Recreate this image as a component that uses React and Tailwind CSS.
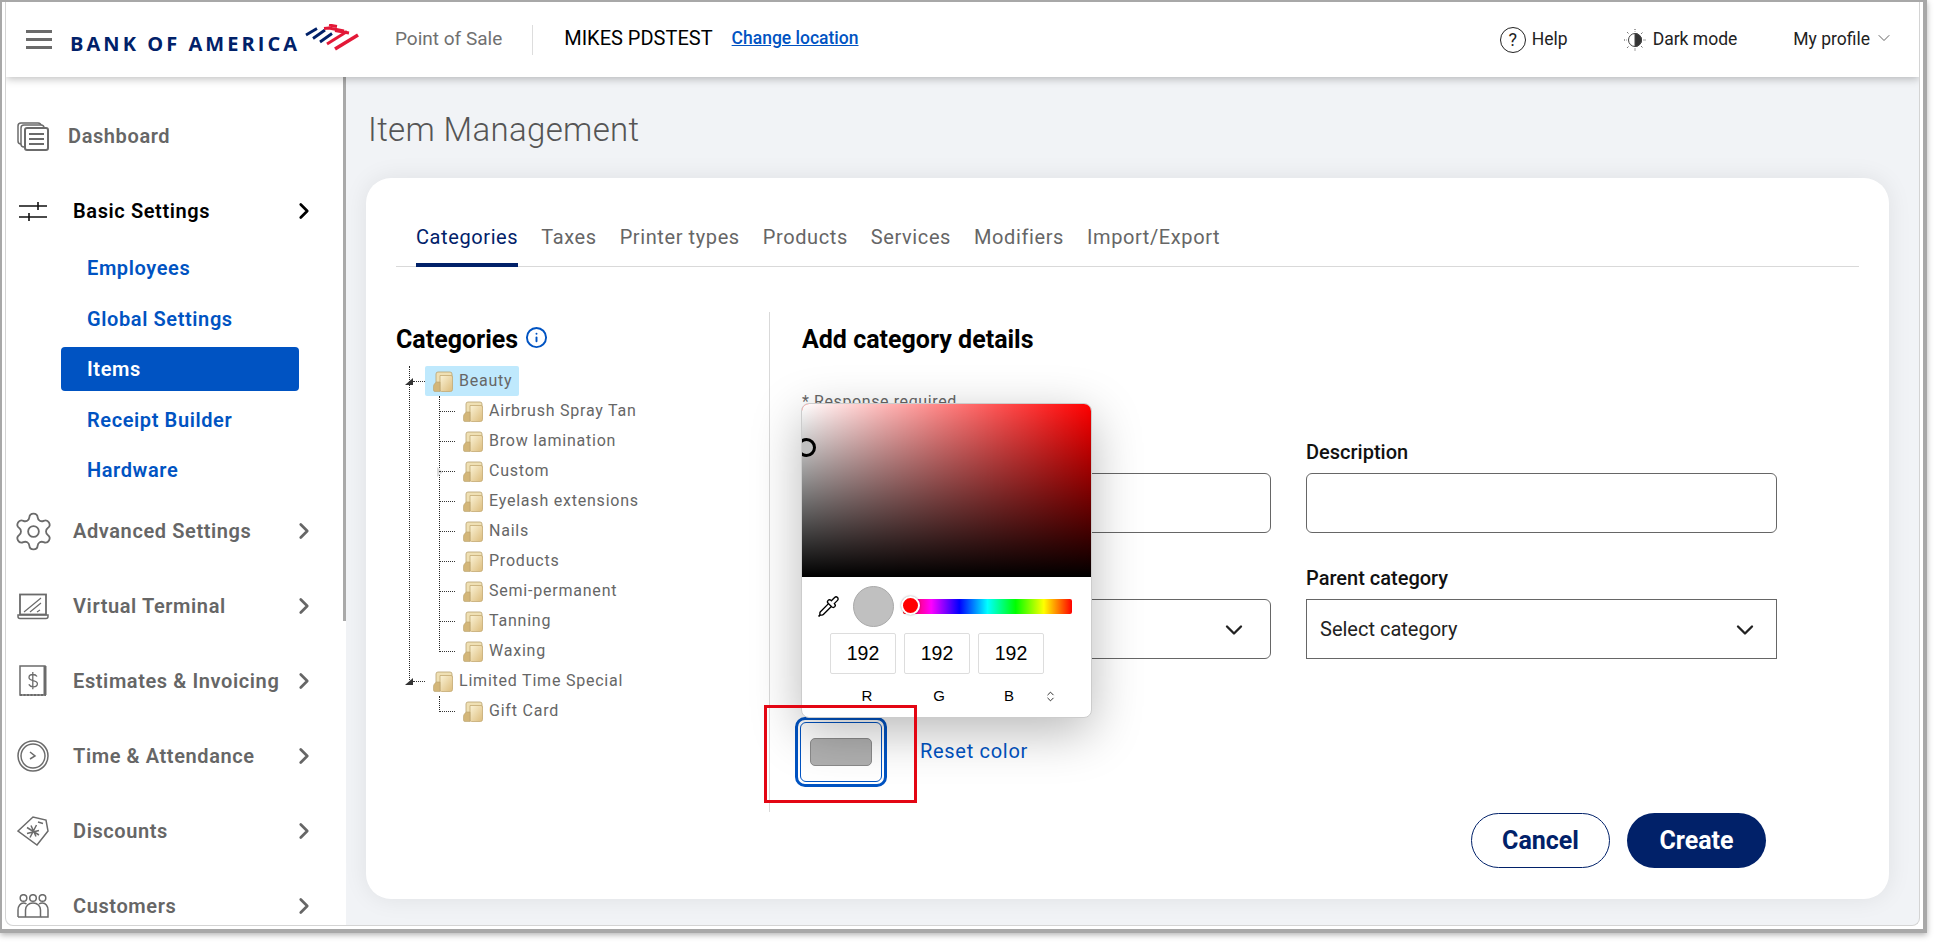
import React from "react";
import { ChevronRight, ChevronDown, ChevronsUpDown, Info, Pipette, Settings } from "lucide-react";

const Ic = { stroke: "#6b6b6b", fill: "none", strokeWidth: 1.5 };

function DashboardIcon() {
  return (
    <svg width="32" height="29" viewBox="0 0 32 29" {...Ic}>
      <rect x="1" y="1" width="23" height="21" rx="3" fill="#fff" />
      <rect x="4" y="3" width="23" height="22" rx="3" fill="#fff" />
      <rect x="8" y="6" width="23" height="22" rx="2" fill="#fff" strokeWidth="2" />
      <path d="M12 12h15M12 17h15M12 22h15" strokeWidth="2" />
    </svg>
  );
}
function SlidersIcon() {
  return (
    <svg width="30" height="21" viewBox="0 0 30 21" stroke="#111" strokeWidth="1.6" fill="none">
      <path d="M1 5h28M1 16h28M20 1v8M11 12v8" />
    </svg>
  );
}
function LaptopIcon() {
  return (
    <svg width="32" height="27" viewBox="0 0 32 27" {...Ic}>
      <rect x="3" y="1.5" width="26" height="20" strokeWidth="1.8" />
      <path d="M7 19 24 5M13 19l11-9M20 19l3-2" strokeWidth="1.2" />
      <path d="M1 22h30v1.5a2 2 0 0 1-2 2H3a2 2 0 0 1-2-2z" strokeWidth="1.5" />
    </svg>
  );
}
function ReceiptIcon() {
  return (
    <svg width="28" height="32" viewBox="0 0 28 32" {...Ic}>
      <path d="M1 1h25v29H1z" />
      <path d="M26 1v29" strokeWidth="3" />
      <path d="M1 30h26" strokeWidth="2" strokeDasharray="2 1.5" />
      <path d="M18 11.5c-1-1.6-2.6-2-4.2-2-2 0-3.8 1-3.8 3 0 4.2 8.4 2 8.4 6.3 0 2-1.9 3-4.1 3-2 0-3.6-.8-4.5-2.4M13.8 7v17.2" strokeWidth="1.3" />
    </svg>
  );
}
function ClockIcon() {
  return (
    <svg width="32" height="32" viewBox="0 0 32 32" {...Ic}>
      <circle cx="16" cy="16" r="15" />
      <circle cx="16" cy="16" r="12" />
      <path d="m13 12 5 4-5 3" />
    </svg>
  );
}
function TagIcon() {
  return (
    <svg width="32" height="30" viewBox="0 0 32 30" {...Ic}>
      <path d="M1 15 16 1l13 3 2 11-11 14z" />
      <path d="M21 6l5 1.5" />
      <path d="M10 11.5 22 19M19.5 9 13 21.5M10 17.5l12-3M14 9.5l5 11" strokeWidth="1.5" />
    </svg>
  );
}
function PeopleIcon() {
  return (
    <svg width="32" height="24" viewBox="0 0 32 24" {...Ic}>
      <circle cx="6.5" cy="4" r="3.3" />
      <circle cx="16" cy="4" r="3.3" />
      <circle cx="25.5" cy="4" r="3.3" />
      <path d="M1 23v-7c0-4 2.5-7 5.5-7 1 0 2 .3 3 1" />
      <path d="M22 10c1-.7 2.3-1 3.5-1 3 0 5.5 3 5.5 7v7H24" />
      <path d="M8.5 23v-7c0-4 3-7 7.500-7s7.500 3 7.500 7v7zM1 23h7" />
    </svg>
  );
}
function HalfSun() {
  return (
    <svg width="24" height="24" viewBox="0 0 24 24" fill="none" stroke="#444" strokeWidth="1">
      <circle cx="12" cy="12" r="6.5" />
      <path d="M12 5.5a6.5 6.5 0 0 1 0 13z" fill="#333" />
      <path d="M12 1v2.5M12 20.5V23M1 12h2.5M20.500 12H23M4.200 4.200 6 6M18 18l1.800 1.800M4.200 19.800 6 18M18 6l1.800-1.800" strokeDasharray="1 1" />
    </svg>
  );
}
function Flag() {
  return (
    <svg width="54" height="27" viewBox="0 0 54 27" fill="none" strokeLinecap="butt">
      <g stroke="#012169" strokeWidth="2.8">
        <path d="M1 11 12 4.5" />
        <path d="M8 14.5 20 6" />
        <path d="M15 18 27 9.500" />
      </g>
      <g stroke="#e31837" strokeWidth="3">
        <path d="M24 1 32 2.500" />
        <path d="M19 4.500 24 4 39 7" />
        <path d="M30 6.500 44 9" />
        <path d="M22 20 42 7.500" />
        <path d="M30 25 53 11" strokeWidth="3.500" />
      </g>
    </svg>
  );
}
function Folder() {
  return (
    <svg width="20" height="21" viewBox="0 0 20 21" className="shrink-0">
      <defs>
        <linearGradient id="fld" x1="0" y1="0" x2="1" y2="1">
          <stop offset="0" stopColor="#fbf3d6" />
          <stop offset="1" stopColor="#dcbc7c" />
        </linearGradient>
      </defs>
      <path d="M3 11V3a2 2 0 0 1 2-2h12a2 2 0 0 1 2 2v4H8v12H3z" fill="#efe0b4" stroke="#b9a26f" strokeWidth=".8" />
      <path d="M7 4.500h11a1.500 1.500 0 0 1 1.500 1.500v12.500a2 2 0 0 1-2 2H8.500A1.500 1.500 0 0 1 7 19z" fill="url(#fld)" stroke="#c4aa72" strokeWidth=".8" />
      <path d="M.5 15.500c0-2 1.500-3.500 3-4.500h3.500v9.500H2a1.500 1.500 0 0 1-1.500-1.500z" fill="#d3b679" stroke="#b9a26f" strokeWidth=".6" />
    </svg>
  );
}

function TreeRow({ label, sub, active }) {
  return (
    <div className={"h-[30px] flex items-center " + (sub ? "pl-[59px]" : "pl-[29px]")}>
      <div className={"flex items-center h-[30px] pl-[8px] pr-[7px] gap-[6px] rounded-[2px] " + (active ? "bg-[#bfe9fd]" : "")}>
        <Folder />
        <span className="text-[16px] tracking-[0.78px] text-[#666] whitespace-nowrap">{label}</span>
      </div>
    </div>
  );
}

const DOT_V = "absolute w-0 border-l border-dotted border-[#222]";
const DOT_H = "absolute h-0 border-t border-dotted border-[#333]";

function Tree() {
  const subs = ["Airbrush Spray Tan", "Brow lamination", "Custom", "Eyelash extensions", "Nails", "Products", "Semi-permanent", "Tanning", "Waxing"];
  return (
    <div className="relative mt-[12px]">
      <div className={DOT_V + " left-[13px] top-0 h-[314px]"} />
      <div className={DOT_V + " left-[43px] top-[30px] h-[256px]"} />
      <div className={DOT_V + " left-[43px] top-[330px] h-[16px]"} />
      <div className="absolute left-[9px] top-[12px] w-0 h-0 border-l-[8px] border-l-transparent border-b-[7px] border-b-[#333]" />
      <div className="absolute left-[9px] top-[312px] w-0 h-0 border-l-[8px] border-l-transparent border-b-[7px] border-b-[#333]" />
      <div className="absolute left-[41px] top-[101px] w-0 h-0 border-l-[6px] border-l-[#ddd] border-y-[5px] border-y-transparent" />
      <div className={DOT_H + " left-[17px] top-[15px] w-[12px]"} />
      <div className={DOT_H + " left-[17px] top-[315px] w-[12px]"} />
      {subs.map((s, i) => (
        <div key={s} className={DOT_H + " left-[43px] w-[16px]"} style={{ top: 45 + i * 30 }} />
      ))}
      <div className={DOT_H + " left-[43px] top-[345px] w-[16px]"} />
      <TreeRow label="Beauty" active />
      {subs.map((s) => (
        <TreeRow key={s} label={s} sub />
      ))}
      <TreeRow label="Limited Time Special" />
      <TreeRow label="Gift Card" sub />
    </div>
  );
}

function NavRow({ icon, label, dark, noChevron, h = "h-[75px]", gap = "ml-[24px]" }) {
  return (
    <div className={"flex items-center pl-[11px] shrink-0 " + h}>
      <div className="w-[32px] flex justify-center shrink-0">{icon}</div>
      <span className={gap + " text-[20px] tracking-[0.6px] font-semibold whitespace-nowrap " + (dark ? "text-black" : "text-[#666]")}>{label}</span>
      {!noChevron && (
        <ChevronRight size={26} strokeWidth={2.5} className={"ml-auto mr-[26px] shrink-0 " + (dark ? "text-black" : "text-[#666]")} />
      )}
    </div>
  );
}

function Sidebar() {
  const subs = ["Employees", "Global Settings", "Items", "Receipt Builder", "Hardware"];
  return (
    <aside className="w-[340px] shrink-0 flex bg-white overflow-hidden rounded-bl-[8px]">
      <nav className="w-[337px] shrink-0 pt-[24px] flex flex-col">
        <NavRow icon={<DashboardIcon />} label="Dashboard" noChevron h="h-[70px]" gap="ml-[19px]" />
        <div className="mt-[15px]">
          <NavRow icon={<SlidersIcon />} label="Basic Settings" dark h="h-[50px]" />
        </div>
        <div className="mt-[10px] ml-[55px] w-[238px] flex flex-col gap-[6.5px]">
          {subs.map((s) => (
            <div
              key={s}
              className={"h-[44px] flex items-center pl-[26px] rounded-[4px] text-[20px] tracking-[0.6px] font-semibold " + (s === "Items" ? "bg-[#0053c2] text-white" : "text-[#0053c2]")}
            >
              {s}
            </div>
          ))}
        </div>
        <div className="h-[1.5px] shrink-0" />
        <NavRow icon={<Settings size={43} strokeWidth={1} color="#6b6b6b" className="shrink-0" />} label="Advanced Settings" />
        <NavRow icon={<LaptopIcon />} label="Virtual Terminal" />
        <NavRow icon={<ReceiptIcon />} label="Estimates & Invoicing" />
        <NavRow icon={<ClockIcon />} label="Time & Attendance" />
        <NavRow icon={<TagIcon />} label="Discounts" />
        <NavRow icon={<PeopleIcon />} label="Customers" />
      </nav>
      <div className="w-[3px] shrink-0 bg-white">
        <div className="h-[544px] bg-[#a9a9a9]" />
      </div>
    </aside>
  );
}

function Header() {
  return (
    <header className="h-[75px] shrink-0 bg-white flex items-center pl-[20px] pr-[25px] shadow-[0_2px_8px_rgba(0,0,0,0.25)] relative z-10">
      <div className="w-[26px] flex flex-col gap-[5px]">
        <div className="h-[3px] bg-[#6b6b6b]" />
        <div className="h-[3px] bg-[#6b6b6b]" />
        <div className="h-[3px] bg-[#6b6b6b]" />
      </div>
      <span className="ml-[18px] mt-[8px] w-[233px] text-[20px] leading-none font-bold tracking-[3.05px] text-[#012169] whitespace-nowrap [font-family:'Open_Sans',sans-serif]">BANK OF AMERICA</span>
      <div className="ml-[2px] -mt-[5px]"><Flag /></div>
      <span className="ml-[36px] text-[19px] text-[#707070] whitespace-nowrap">Point of Sale</span>
      <div className="ml-[30px] w-px h-[30px] bg-[#ddd]" />
      <span className="ml-[31px] text-[20px] text-black whitespace-nowrap -mt-[3px]">MIKES PDSTEST</span>
      <a className="ml-[19px] text-[17.5px] font-medium text-[#0053c2] underline whitespace-nowrap -mt-[3px]">Change location</a>
      <div className="ml-auto flex items-center">
        <span className="w-[26px] h-[26px] rounded-full border border-[#222] flex items-center justify-center text-[18px] text-[#222]">?</span>
        <span className="ml-[6px] text-[17.5px] text-[#222]">Help</span>
        <div className="ml-[55px]"><HalfSun /></div>
        <span className="ml-[6px] text-[17.5px] text-[#222] whitespace-nowrap">Dark mode</span>
        <span className="ml-[56px] text-[17.5px] text-[#222] whitespace-nowrap">My profile</span>
        <ChevronDown size={20} strokeWidth={1} className="ml-[4px] text-[#444] -mt-[3px]" />
      </div>
    </header>
  );
}

function Field({ label, children }) {
  return (
    <div className="flex flex-col">
      <label className="h-[42px] flex items-center text-[20px] font-medium text-[#111]">{label}</label>
      {children}
    </div>
  );
}

function Popover() {
  return (
    <div className="absolute left-[435px] top-[225px] w-[291px] h-[315px] bg-white rounded-[8px] border border-[#ccc] overflow-hidden shadow-[0_14px_50px_rgba(0,0,0,0.28)] z-20 [font-family:'Liberation_Sans',sans-serif]">
      <div className="relative h-[173px] overflow-hidden bg-[#ff0000] bg-[linear-gradient(to_top,#000,transparent),linear-gradient(to_right,#fff,transparent)]">
        <div className="absolute left-[-5px] top-[34px] w-[19px] h-[19px] rounded-full border-[3px] border-black bg-[#c0c0c0]" />
      </div>
      <div className="flex items-center h-[56px] pl-[15px] pt-[3px]">
        <Pipette size={23} strokeWidth={1.4} className="text-black shrink-0" />
        <div className="ml-[13px] w-[41px] h-[41px] rounded-full bg-[#c0c0c0] border border-[#aaa] shrink-0" />
        <div className="relative ml-[9px] w-[169px] h-[15px] rounded-[2px] bg-[linear-gradient(to_right,#f00,#f0f,#00f,#0ff,#0f0,#ff0,#f00)]">
          <div className="absolute left-[-2px] top-[-3px] w-[19px] h-[19px] rounded-full bg-[#f00] border-2 border-white shadow-[0_0_2px_rgba(0,0,0,0.4)]" />
        </div>
      </div>
      <div className="flex gap-[8px] pl-[28px]">
        {[0, 1, 2].map((i) => (
          <div key={i} className="w-[66px] h-[41px] border border-[#ddd] rounded-[2px] flex items-center justify-center text-[19.5px] text-black">192</div>
        ))}
      </div>
      <div className="flex items-center h-[30px] mt-[7px] pl-[28px] text-[15px] text-black">
        <span className="w-[74px] text-center">R</span>
        <span className="w-[70px] text-center">G</span>
        <span className="w-[70px] text-center">B</span>
        <ChevronsUpDown size={13} strokeWidth={1.5} />
      </div>
    </div>
  );
}

function Card() {
  const tabs = ["Categories", "Taxes", "Printer types", "Products", "Services", "Modifiers", "Import/Export"];
  return (
    <section className="relative w-[1523px] h-[721px] rounded-[25px] bg-white px-[30px] pt-[36px] shadow-[0_0_24px_rgba(0,0,0,0.08)]">
      <div className="flex gap-[23px] pl-[20px] h-[53px] border-b border-[#d9d9d9]">
        {tabs.map((t, i) => (
          <div key={t} className={"h-[53px] pt-[10px] text-[20px] leading-[26px] tracking-[0.6px] whitespace-nowrap " + (i === 0 ? "border-b-4 border-[#012169] text-[#012169]" : "text-[#666]")}>
            {t}
          </div>
        ))}
      </div>
      <div className="flex mt-[45px]">
        <div className="w-[374px] h-[500px] shrink-0 border-r border-[#d9d9d9]">
          <h2 className="mt-[14px] h-[28px] flex items-center gap-[7px] text-[25px] font-bold text-black">
            Categories
            <Info size={23} strokeWidth={2} className="text-[#0053c2] -mt-[6px]" />
          </h2>
          <Tree />
        </div>
        <div className="pl-[32px] w-[1008px] shrink-0">
          <h2 className="mt-[14px] h-[28px] flex items-center text-[25px] font-bold text-black">Add category details</h2>
          <div className="mt-[38px] h-[20px] leading-[20px] text-[16px] tracking-[0.6px] text-[#666]">* Response required</div>
          <div className="grid grid-cols-[469px_471px] gap-x-[35px] mt-[19px] gap-y-[24px]">
            <Field label="Category name">
              <div className="h-[60px] border border-[#666] rounded-[6px]" />
            </Field>
            <Field label="Description">
              <div className="h-[60px] border border-[#666] rounded-[6px]" />
            </Field>
            <Field label="Type">
              <div className="h-[60px] border border-[#666] rounded-[6px] flex items-center justify-end pr-[22px]">
                <ChevronDown size={28} strokeWidth={2} className="text-[#222] mt-[2px]" />
              </div>
            </Field>
            <Field label="Parent category">
              <div className="h-[60px] border border-[#666] flex items-center justify-between pl-[13px] pr-[17px] text-[20px] text-[#222]">
                Select category
                <ChevronDown size={28} strokeWidth={2} className="text-[#222] mt-[2px]" />
              </div>
            </Field>
          </div>
          <div className="flex items-center mt-[58px] -ml-[7px]">
            <div className="w-[92px] h-[70px] rounded-[10px] border-[3px] border-[#0053c2] p-[2px]">
              <div className="w-full h-full rounded-[6px] border border-[#0053c2] flex items-center justify-center">
                <div className="w-[62px] h-[28px] rounded-[5px] bg-[#b0b0b0] border border-[#8a8a8a]" />
              </div>
            </div>
            <span className="ml-[33px] text-[20px] tracking-[0.7px] text-[#0053c2] -mt-[3px]">Reset color</span>
          </div>
          <div className="flex justify-end gap-[17px] pr-[12px] mt-[26px]">
            <div className="w-[139px] h-[55px] rounded-[28px] border border-[#012169] flex items-center justify-center text-[25px] font-bold text-[#012169]">Cancel</div>
            <div className="w-[139px] h-[55px] rounded-[28px] bg-[#012169] flex items-center justify-center text-[25px] font-bold text-white">Create</div>
          </div>
        </div>
      </div>
      <Popover />
      <div className="absolute left-[398px] top-[527px] w-[153px] h-[98px] border-[3px] border-[#e30613] z-30" />
    </section>
  );
}

export default function App() {
  return (
    <div className="w-[1934px] h-[942px] bg-white overflow-hidden [font-family:Roboto,sans-serif]">
      <div className="w-[1927px] h-[933px] border-t-2 border-l-2 border-r-4 border-b-4 border-[#a8a8a8] pl-[3px] pr-[3px] pb-[3px] shadow-[0_2px_6px_rgba(0,0,0,0.3)]">
        <div className="h-full flex flex-col rounded-b-[8px] bg-[#f1f3f6] border-b border-x border-[#d4d4d4] border-t-0 overflow-hidden">
          <Header />
          <div className="flex flex-1 min-h-0">
            <Sidebar />
            <main className="flex-1 pl-[20px] min-w-0">
              <h1 className="h-[101px] pt-[33px] pl-[2px] text-[33px] leading-[40px] font-light tracking-[0.35px] text-[#555]">Item Management</h1>
              <Card />
            </main>
          </div>
        </div>
      </div>
    </div>
  );
}
